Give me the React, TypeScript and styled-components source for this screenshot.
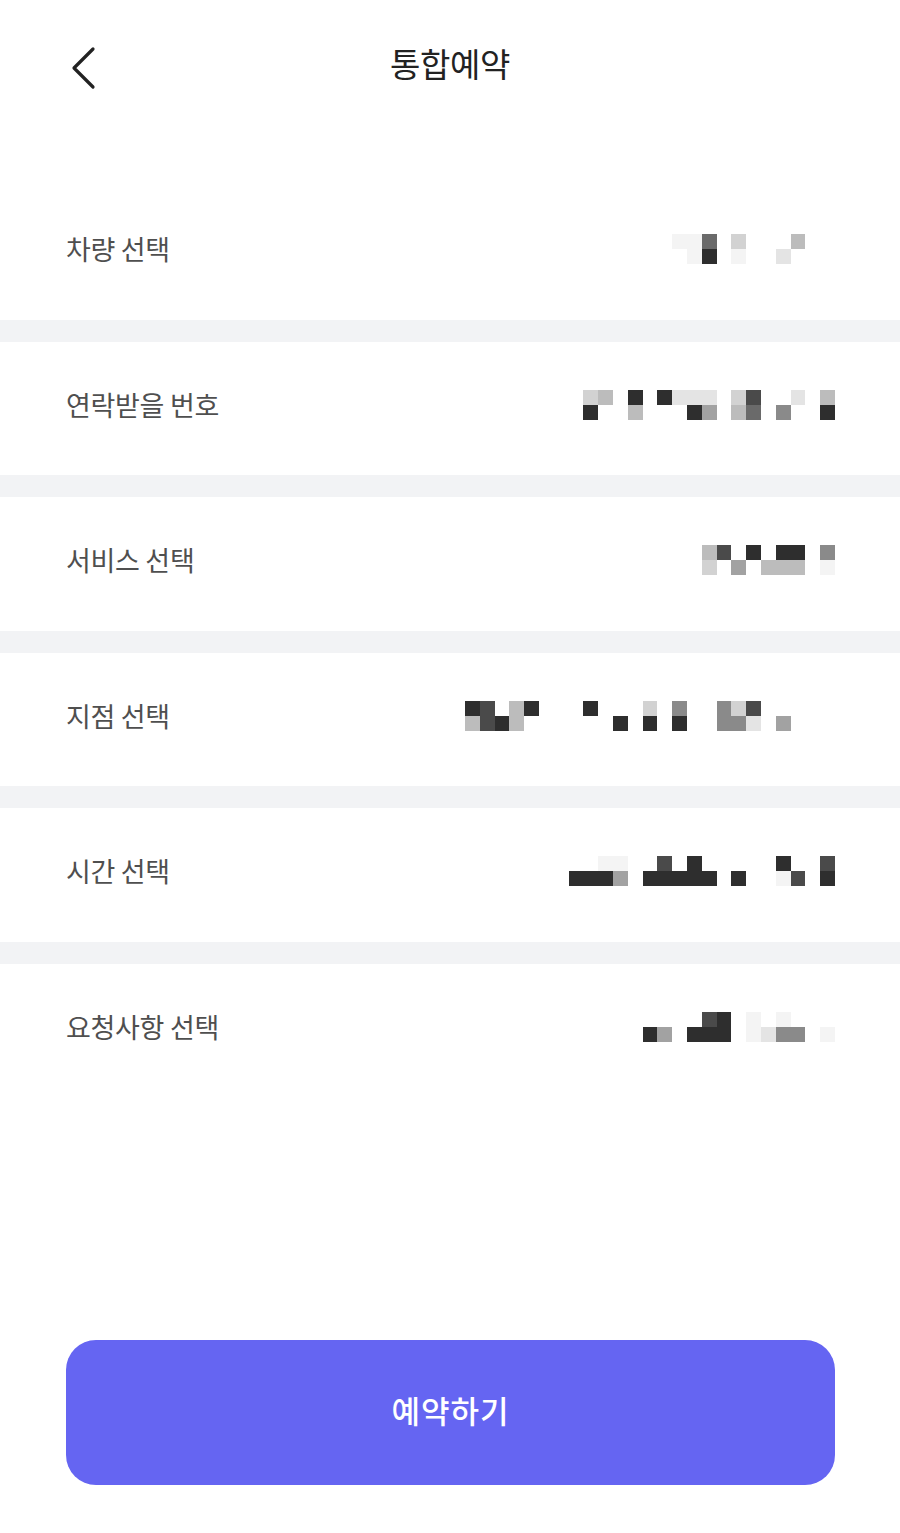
import React from 'react';
import styled, { createGlobalStyle } from 'styled-components';

const GlobalStyle = createGlobalStyle`
  html, body {
    margin: 0;
    padding: 0;
    background: #ffffff;
  }
  body {
    font-family: "Noto Sans CJK KR", "Noto Sans", sans-serif;
  }
`;

const Page = styled.div`
  width: 900px;
  min-height: 1533px;
  display: flex;
  flex-direction: column;
  background: #ffffff;
`;

const Header = styled.header`
  height: 130px;
  padding-bottom: 4px;
  box-sizing: border-box;
  display: flex;
  align-items: center;
  justify-content: center;
  position: relative;
`;

const BackButton = styled.button`
  position: absolute;
  left: 60px;
  top: 40px;
  width: 46px;
  height: 56px;
  padding: 0;
  border: 0;
  background: none;
  display: flex;
  align-items: center;
  justify-content: center;
  cursor: pointer;
`;

const Title = styled.h1`
  margin: 0;
  font-size: 33px;
  font-weight: 400;
  color: #222222;
  line-height: 1;
  letter-spacing: -0.3px;
`;

const List = styled.div`
  margin-top: 56px;
  display: flex;
  flex-direction: column;
`;

const Row = styled.div`
  height: 133.5px;
  padding: 0 65px 8px 66px;
  box-sizing: border-box;
  display: flex;
  align-items: center;
  justify-content: space-between;
`;

const Divider = styled.div`
  height: 22px;
  background: #f2f3f5;
`;

const Label = styled.span`
  font-size: 27px;
  color: #4f4f4f;
  line-height: 1;
  letter-spacing: -0.3px;
`;

// blurred value: grid of grey tiles
const Mosaic = styled.div<{ $cols: number }>`
  display: grid;
  grid-template-columns: repeat(${p => p.$cols}, 14.8px);
  grid-auto-rows: 15px;
  margin-top: 1px;
  filter: blur(0.6px);
`;

const shades: Record<string, string> = {
  '.': 'transparent',
  '1': '#f4f4f4',
  '2': '#e4e4e4',
  '3': '#d2d2d2',
  '4': '#bcbcbc',
  '5': '#a2a2a2',
  '6': '#8a8a8a',
  '7': '#6a6a6a',
  '8': '#4a4a4a',
  '9': '#2e2e2e',
};

const Tile = styled.div<{ $shade: string }>`
  background: ${p => shades[p.$shade] ?? 'transparent'};
`;

const Spacer = styled.div`
  flex: 1;
`;

const SubmitButton = styled.button`
  margin: 0 65px 48px 66px;
  height: 145px;
  padding: 0 0 6px;
  border: 0;
  border-radius: 30px;
  background: #6565f2;
  color: #ffffff;
  font-family: "Noto Sans CJK KR", "Noto Sans", sans-serif;
  font-size: 31px;
  font-weight: 500;
  letter-spacing: 1px;
  cursor: pointer;
`;

type Item = { label: string; rows: string[] };

const items: Item[] = [
  { label: '차량 선택', rows: ['117.3...4..', '.19.1..2...'] },
  { label: '연락받을 번호', rows: ['34.9.9222.38..2.4', '9..4...95.47.6..9'] },
  { label: '서비스 선택', rows: ['48.9.99.6', '3.5.444.1'] },
  { label: '지점 선택', rows: ['98.49...9...3.6..638.....', '4894......9.9.9..662.5...'] },
  { label: '시간 선택', rows: ['..11..8.9.....9..8', '9995.99999.9..18.9'] },
  { label: '요청사항 선택', rows: ['....89.1.1...', '95.999.1266.1'] },
];

const BlurredValue: React.FC<{ rows: string[] }> = ({ rows }) => {
  const cols = rows[0].length;
  return (
    <Mosaic $cols={cols}>
      {rows.map((r, ri) =>
        r.split('').map((c, ci) => <Tile key={`${ri}-${ci}`} $shade={c} />)
      )}
    </Mosaic>
  );
};

const ChevronLeft = () => (
  <svg width="28" height="44" viewBox="0 0 28 44" fill="none">
    <path
      d="M24 3 L5 22 L24 41"
      stroke="#222222"
      strokeWidth="3.2"
      strokeLinecap="round"
      strokeLinejoin="round"
    />
  </svg>
);

const App: React.FC = () => {
  return (
    <>
      <GlobalStyle />
      <Page>
        <Header>
          <BackButton aria-label="뒤로">
            <ChevronLeft />
          </BackButton>
          <Title>통합예약</Title>
        </Header>
        <List>
          {items.map((item, i) => (
            <React.Fragment key={item.label}>
              {i > 0 && <Divider />}
              <Row>
                <Label>{item.label}</Label>
                <BlurredValue rows={item.rows} />
              </Row>
            </React.Fragment>
          ))}
        </List>
        <Spacer />
        <SubmitButton>예약하기</SubmitButton>
      </Page>
    </>
  );
};

export default App;
